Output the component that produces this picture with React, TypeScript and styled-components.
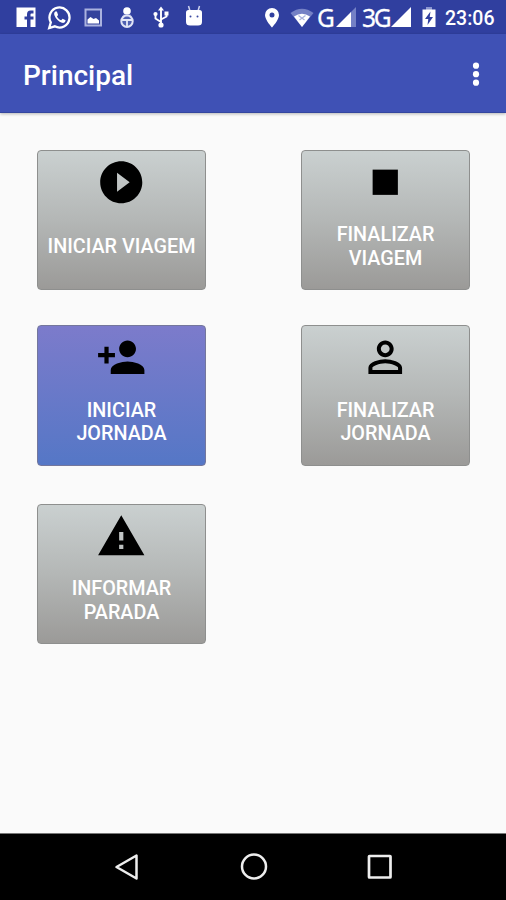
import React from "react";
import styled, { createGlobalStyle } from "styled-components";

const GlobalStyle = createGlobalStyle`
  html, body { margin: 0; padding: 0; background: #fafafa; }
  * { box-sizing: border-box; }
`;

const Screen = styled.div`
  width: 506px;
  height: 900px;
  display: flex;
  flex-direction: column;
  overflow: hidden;
  background: #fafafa;
  font-family: Roboto, "Liberation Sans", sans-serif;
  color: #fff;
`;

const StatusBar = styled.header`
  height: 34px;
  flex: none;
  display: flex;
  justify-content: space-between;
  padding: 0 11px 0 15px;
  background: #303f9f;
`;

const StatusGroup = styled.div`
  display: flex;
  align-items: center;
  height: 34px;
`;

const StatusIcon = styled.svg<{ $w: number; $gap?: number }>`
  display: block;
  flex: none;
  width: ${(p) => p.$w}px;
  height: 26px;
  margin-left: ${(p) => p.$gap ?? 0}px;
`;

const Network = styled.span<{ $w: number; $gap: number }>`
  flex: none;
  width: ${(p) => p.$w}px;
  margin-left: ${(p) => p.$gap}px;
  font-family: "Noto Sans", sans-serif;
  font-size: 24.5px;
  font-weight: 400;
  line-height: 34px;
  letter-spacing: -2.2px;
  padding-top: 1px;
  -webkit-text-stroke: 0.3px #fff;
`;

const Clock = styled.time`
  flex: none;
  width: 50px;
  margin-left: 9px;
  font-size: 19.5px;
  font-weight: 500;
  line-height: 34px;
  padding-top: 3px;
  white-space: nowrap;
`;

const AppBar = styled.div`
  height: 79px;
  flex: none;
  display: flex;
  align-items: center;
  justify-content: space-between;
  padding: 3px 25px 0 23px;
  background: #3f51b5;
  border-bottom: 1px solid #34469f;
  box-shadow: 0 1px 3px rgba(0, 0, 0, 0.28);
`;

const Title = styled.h1`
  margin: 2px 0 0;
  font-size: 28px;
  font-weight: 500;
  line-height: 32px;
`;

const MenuButton = styled.button`
  padding: 0;
  border: 0;
  background: none;
  svg { display: block; }
`;

const Actions = styled.main`
  flex: 1;
  display: grid;
  grid-template-columns: 169px 169px;
  grid-template-rows: 141px 141px 141px;
  column-gap: 95px;
  row-gap: 36.5px;
  align-content: start;
  padding: 36.5px 0 0 37px;
`;

const ActionButton = styled.button<{ $active?: boolean; $lift?: number }>`
  display: flex;
  flex-direction: column;
  align-items: center;
  margin: ${(p) => -(p.$lift ?? 0)}px 0 0;
  height: 140.5px;
  padding: 6px 6px 0;
  border: 1px solid ${(p) => (p.$active ? "#74779c" : "#8e8f8e")};
  border-radius: 4px;
  background: ${(p) =>
    p.$active
      ? "linear-gradient(#7c7bcb, #5577c6)"
      : "linear-gradient(#cad0d0, #b4b7b6 50%, #9b9a98)"};
  color: #fff;
  font-family: inherit;
`;

const ActionIcon = styled.svg`
  display: block;
  flex: none;
  width: 50.5px;
  height: 50.5px;
  fill: #000;
`;

const ActionLabel = styled.span`
  display: flex;
  flex: none;
  align-items: center;
  justify-content: center;
  height: 79px;
  font-size: 19.8px;
  font-weight: 500;
  line-height: 23.3px;
  text-align: center;
  white-space: pre;
`;

const NavBar = styled.nav`
  height: 67px;
  flex: none;
  display: flex;
  justify-content: center;
  align-items: center;
  gap: 98.5px;
  padding-left: 1px;
  background: #000;
  border-top: 1px solid #777;
  svg { display: block; }
`;

const actions = [
  {
    label: "INICIAR VIAGEM",
    path: "M12 2C6.48 2 2 6.48 2 12s4.48 10 10 10 10-4.48 10-10S17.52 2 12 2zm-2 14.5v-9l6 4.5-6 4.5z",
  },
  { label: "FINALIZAR\nVIAGEM", path: "M6 6h12v12H6z" },
  {
    label: "INICIAR\nJORNADA",
    path: "M15 12c2.21 0 4-1.79 4-4s-1.79-4-4-4-4 1.79-4 4 1.79 4 4 4zm-9-2V7H4v3H1v2h3v3h2v-3h3v-2H6zm9 4c-2.67 0-8 1.34-8 4v2h16v-2c0-2.66-5.33-4-8-4z",
    active: true,
    lift: 2,
  },
  {
    label: "FINALIZAR\nJORNADA",
    path: "M12 5.9c1.16 0 2.1.94 2.1 2.1s-.94 2.1-2.1 2.1S9.900 9.160 9.900 8s.94-2.100 2.100-2.100m0 9c2.970 0 6.100 1.460 6.100 2.100v1.100H5.900V17c0-.64 3.130-2.100 6.100-2.100M12 4C9.790 4 8 5.790 8 8s1.790 4 4 4 4-1.790 4-4-1.790-4-4-4zm0 9c-2.670 0-8 1.340-8 4v3h16v-3c0-2.660-5.330-4-8-4z",
    lift: 2,
  },
  {
    label: "INFORMAR\nPARADA",
    path: "M1 21h22L12 2 1 21zm12-3h-2v-2h2v2zm0-4h-2v-4h2v4z",
    lift: 1,
  },
];

function Notifications() {
  return (
    <StatusGroup>
      <StatusIcon $w={22} viewBox="0 0 22 26" fill="#fff">
        <path d="M1.500 3.500h19v19.500h-5v-7.500h3v-3h-3v-2q0-1 1-1h2V6.500h-3q-3.500 0-3.500 4v2H9.500v3H12V23H1.500z" />
      </StatusIcon>
      <StatusIcon $w={24} $gap={10} viewBox="0 0 24 26">
        <path d="M2.200 24l1.600-5.600a10 10 0 1 1 4 3.900z" fill="none" stroke="#fff" strokeWidth="2.300" />
        <path
          d="M8.300 7.500c-1 .7-1.500 2.300-.8 4 1.400 3.500 4.200 6.100 7.500 7.300 1.800.5 3.500-.5 3.600-2.500l-3-1.500-1.400 1.500c-2-.8-3.300-2.100-4.200-3.900l1.100-1.500-1.200-3.300z"
          fill="#fff"
        />
      </StatusIcon>
      <StatusIcon $w={18} $gap={13} viewBox="0 0 18 26">
        <rect x="1.500" y="5.500" width="15.500" height="16" fill="#34439c" stroke="#aab2df" strokeWidth="2" />
        <path d="M3.500 19.500v-4l3-2.500 3 2 2.500-1 3 2.500v3z" fill="#fff" />
      </StatusIcon>
      <StatusIcon $w={16} $gap={17} viewBox="0 0 16 26">
        <circle cx="8" cy="7" r="3.800" fill="#fff" />
        <path d="M4.500 10.500h7l2 3h-11z" fill="#8f9ad3" />
        <circle cx="8" cy="17.200" r="5.700" fill="#5060b2" stroke="#e0e3f5" strokeWidth="2" />
        <path d="M3 16h10M8 16v6" stroke="#e4e7f7" strokeWidth="1.800" />
      </StatusIcon>
      <StatusIcon $w={18} $gap={17} viewBox="0 0 18 26" fill="#fff">
        <path d="M9 2.500l3 4H6z" />
        <path d="M9 5v17M9 18l-5.500-3.500V10M9 15.500l5.500-3V9" fill="none" stroke="#fff" strokeWidth="1.900" />
        <circle cx="3.500" cy="10" r="2.100" />
        <path d="M12.500 7.500h4v4h-4z" />
        <circle cx="9" cy="21" r="2.600" />
      </StatusIcon>
      <StatusIcon $w={18} $gap={15} viewBox="0 0 18 26">
        <path d="M3.500 2l1.500 5M14.500 2L13 7" stroke="#cfd4ef" strokeWidth="1.500" />
        <path d="M1 8.500Q1 6 3.500 6h11Q17 6 17 8.500V18q0 3.500-4 3.500H5q-4 0-4-3.500z" fill="#fff" />
        <circle cx="5.500" cy="12.500" r="1" fill="#3846a0" />
        <circle cx="12.500" cy="12.500" r="1" fill="#3846a0" />
      </StatusIcon>
    </StatusGroup>
  );
}

function SystemStatus() {
  return (
    <StatusGroup>
      <StatusIcon $w={16} viewBox="0 0 16 26">
        <path
          d="M7 4a7 7 0 0 0-7 7c0 5 7 12.500 7 12.500S14 16 14 11a7 7 0 0 0-7-7zm0 4.600a2.500 2.500 0 1 1 0 5 2.500 2.500 0 0 1 0-5z"
          fill="#fff"
        />
      </StatusIcon>
      <StatusIcon $w={24} $gap={9} viewBox="0 0 24 26">
        <path d="M.5 9Q12 .5 23.500 9L12 23z" fill="#7581c5" />
        <path d="M4 12.500q8-5.500 16 0L12 23z" fill="#fff" />
        <path d="M8.500 11.500l6 4.500M15.500 11.500l-6 4.500" stroke="#a9b1dc" strokeWidth="1.200" />
      </StatusIcon>
      <Network $w={18} $gap={3}>G</Network>
      <StatusIcon $w={21} $gap={1} viewBox="0 0 21 26">
        <path d="M14 9l6-6v20h-6z" fill="#7380c5" />
        <path d="M0 23L15 8v15z" fill="#fff" />
      </StatusIcon>
      <Network $w={28} $gap={5}>3G</Network>
      <StatusIcon $w={21} $gap={1} viewBox="0 0 21 26">
        <path d="M0 23L20 3v20z" fill="#fff" />
      </StatusIcon>
      <StatusIcon $w={14} $gap={10} viewBox="0 0 14 26">
        <path d="M4 3h6v3H4z" fill="#8b96d0" />
        <path d="M.5 5.500h13v17.500H.5z" fill="#fff" />
        <path d="M8.500 7.500L3 15h3.300L5.500 21 11 13H7.700z" fill="#303f9f" />
      </StatusIcon>
      <Clock>23:06</Clock>
    </StatusGroup>
  );
}

export default function App() {
  return (
    <>
      <GlobalStyle />
      <Screen>
        <StatusBar>
          <Notifications />
          <SystemStatus />
        </StatusBar>
        <AppBar>
          <Title>Principal</Title>
          <MenuButton aria-label="Menu">
            <svg width="10" height="26" viewBox="0 0 10 26" fill="#fff">
              <circle cx="5" cy="3.700" r="3.100" />
              <circle cx="5" cy="12.200" r="3.100" />
              <circle cx="5" cy="20.700" r="3.100" />
            </svg>
          </MenuButton>
        </AppBar>
        <Actions>
          {actions.map((a) => (
            <ActionButton key={a.label} $active={a.active} $lift={a.lift}>
              <ActionIcon viewBox="0 0 24 24">
                <path d={a.path} />
              </ActionIcon>
              <ActionLabel>{a.label}</ActionLabel>
            </ActionButton>
          ))}
        </Actions>
        <NavBar>
          <svg width="28" height="30" viewBox="0 0 28 30" fill="none" stroke="#eee" strokeWidth="2.500">
            <path d="M3.500 15L23.500 3.500v23z" strokeLinejoin="round" />
          </svg>
          <svg width="28" height="30" viewBox="0 0 28 30" fill="none" stroke="#eee" strokeWidth="2.500">
            <circle cx="14" cy="14.500" r="12" />
          </svg>
          <svg width="28" height="30" viewBox="0 0 28 30" fill="none" stroke="#eee" strokeWidth="2.700">
            <rect x="3" y="4" width="21.500" height="21.500" rx="0.500" />
          </svg>
        </NavBar>
      </Screen>
    </>
  );
}
